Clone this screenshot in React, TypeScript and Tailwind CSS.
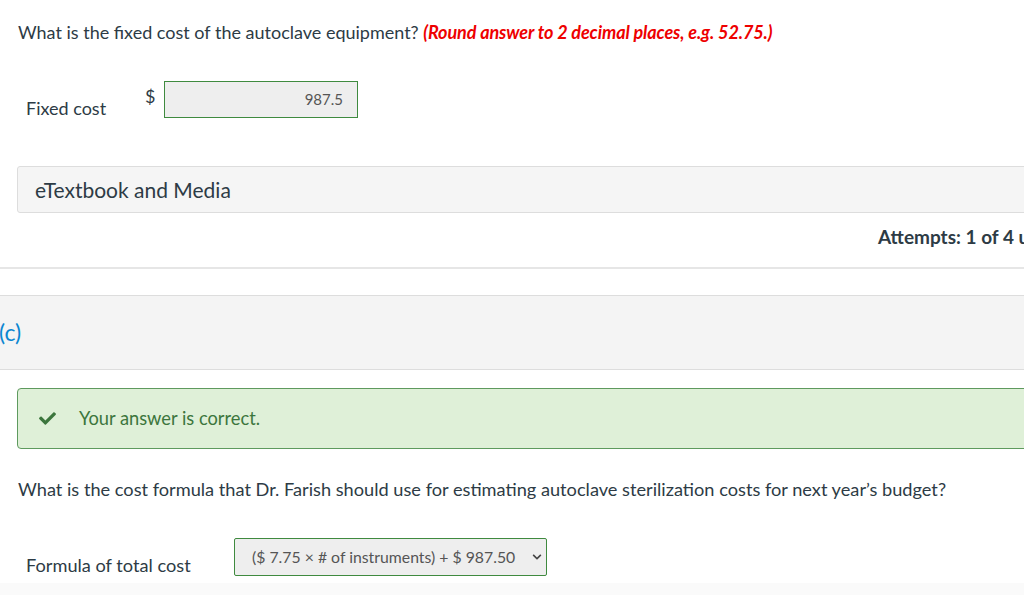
import { FaCheck, FaChevronDown } from "react-icons/fa";

export default function App() {
  return (
    <div className="w-[1024px] h-[595px] overflow-hidden bg-white text-[#2d3b45] font-['Lato','Liberation_Sans',sans-serif]">
      {/* question b */}
      <p className="pl-[18px] pt-[21px] text-[18px] leading-[22px] whitespace-nowrap">
        What is the fixed cost of the autoclave equipment?{" "}
        <span className="text-[#ee0000] font-bold italic tracking-[-0.1px]">
          (Round answer to 2 decimal places, e.g. 52.75.)
        </span>
      </p>

      <div className="flex items-start mt-[38px] h-[37px]">
        <span className="ml-[26px] w-[119px] mt-[17px] text-[18px] leading-[20px]">Fixed cost</span>
        <span className="w-[19px] mt-[5px] text-[18px] leading-[20px]">$</span>
        <div className="w-[194px] h-[37px] bg-[#eeeeee] border border-[#3f8a3f] flex items-center justify-end pr-[14px] text-[15px] text-[#555]">
          987.5
        </div>
      </div>

      <div className="ml-[17px] mt-[48px] w-[1100px] h-[47px] bg-[#f5f5f5] border border-[#dddddd] rounded-l-[3px] flex items-center pl-[17px] text-[21px]">
        eTextbook and Media
      </div>

      <div className="mt-[13px] pl-[878px] whitespace-nowrap text-[19px] leading-[22px] font-bold">
        Attempts: 1 of 4 used
      </div>

      <div className="mt-[19px] h-[2px] bg-[#e6e6e6]" />

      {/* part c */}
      <div className="mt-[26px] h-[75px] bg-[#f4f4f4] border-y border-[#dddddd] flex items-center">
        <span className="text-[23px] text-[#0b86d1] -ml-[1px]">(c)</span>
      </div>

      <div className="ml-[17px] mt-[18px] w-[1100px] h-[61px] bg-[#dff0d8] border border-[#5e9a5e] rounded-[4px] flex items-center">
        <FaCheck className="ml-[19px] w-[21px] h-[17px] text-[#3c763d]" />
        <span className="ml-[21px] text-[18.3px] text-[#3c763d]">Your answer is correct.</span>
      </div>

      <p className="pl-[18px] mt-[29px] text-[18.2px] leading-[22px] whitespace-nowrap">
        What is the cost formula that Dr. Farish should use for estimating autoclave sterilization costs for next year’s budget?
      </p>

      <div className="flex items-start mt-[38px] h-[38px]">
        <span className="ml-[26px] w-[208px] mt-[17px] text-[18.2px] leading-[20px]">Formula of total cost</span>
        <div className="w-[313px] h-[38px] bg-[#eeeeee] border border-[#3f8a3f] rounded-[2px] flex items-center pl-[17px] text-[15.8px] text-[#555]">
          <span>($ 7.75 × # of instruments) + $ 987.50</span>
          <FaChevronDown className="ml-auto mr-[4px] w-[10px] h-[10px] text-[#444]" />
        </div>
      </div>

      <div className="mt-[7px] h-[20px] bg-[#fafafa]" />
    </div>
  );
}
